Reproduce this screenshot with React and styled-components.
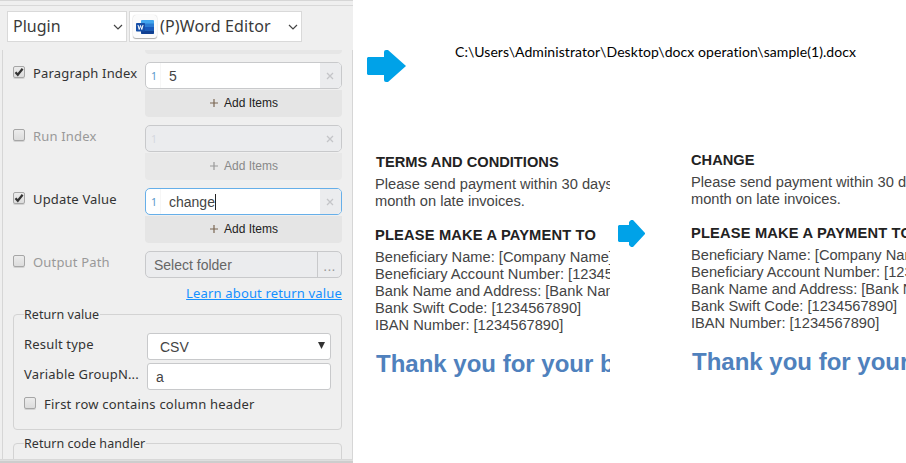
import React from "react";
import styled, { createGlobalStyle } from "styled-components";

const Global = createGlobalStyle`
  * { box-sizing: border-box; }
  body { margin: 0; background: #fff; overflow: hidden; }
`;

const Page = styled.div`
  display: flex;
  width: 906px;
  height: 463px;
  overflow: hidden;
  background: #fff;
`;

const Panel = styled.aside`
  display: flex;
  flex-direction: column;
  flex: none;
  width: 353px;
  height: 463px;
  background: #efefef;
  border-top: 1px solid #d6d6d6;
  font-family: "Noto Sans", sans-serif;
  color: #333;
`;

const Toolbar = styled.header`
  display: flex;
  gap: 2px;
  height: 45px;
  margin-top: 4px;
  padding: 5px 0 0 7px;
  border-top: 1px solid #d8d8d8;
`;

const Picker = styled.div`
  display: flex;
  align-items: center;
  width: ${(p) => p.$w}px;
  height: 31px;
  padding: 0 3px 0 ${(p) => p.$pad}px;
  background: #fff;
  border: 1px solid #d9d9d9;
  font-size: 16px;
  line-height: 29px;
  letter-spacing: ${(p) => p.$ls || 0}px;
  color: #3a3a3a;
  white-space: nowrap;
  svg.chevron { margin-left: auto; }
`;

const AppIcon = styled.span`
  display: flex;
  align-items: center;
  justify-content: center;
  width: 24px;
  height: 23px;
  margin-right: 3px;
  background: #fbfbfb;
  border-radius: 3px;
  box-shadow: 0 1px 1px #aaa, 0 0 1px #ccc;
`;

const Scroller = styled.main`
  display: flex;
  flex-direction: column;
  width: 351px;
  height: 409px;
  margin-left: 2px;
  padding: 0 10px 0 10px;
  overflow: hidden;
  border: solid #d6d6d6;
  border-width: 0 1px;
`;

const StatusStrip = styled.footer`
  height: 4px;
  background: #cdcdcd;
  border-top: 1px solid #d8d8d8;
  box-shadow: inset 0 1px 0 #dedede;
`;

const Remainder = styled.div`
  flex: none;
  width: 197px;
  height: 4px;
  margin-left: 132px;
  background: #e6e6e6;
  border-radius: 0 0 4px 4px;
`;

const Field = styled.section`
  display: flex;
  flex: none;
  height: ${(p) => p.$h || 63}px;
`;

const FieldLabel = styled.label`
  display: flex;
  width: 132px;
  gap: 8px;
  padding-top: 4px;
  font-size: 13px;
  line-height: 15px;
  letter-spacing: 0.17px;
  white-space: nowrap;
  color: ${(p) => (p.$off ? "#999" : "#333")};
`;

const Box = styled.span`
  display: flex;
  flex: none;
  width: 12px;
  height: 12px;
  border: 1px solid #a6a6a6;
  border-radius: 2px;
  background: linear-gradient(#ececec, #dcdcdc);
  box-shadow: 0 1px 0 #d2d2d2;
`;

const Controls = styled.div`
  display: flex;
  flex-direction: column;
  gap: 1px;
  width: 197px;
  font-family: "Liberation Sans", sans-serif;
`;

const Entry = styled.div`
  display: flex;
  height: 27px;
  overflow: hidden;
  border: 1px solid ${(p) => (p.$focus ? "#66afe9" : "#c8c9cb")};
  border-radius: 5px;
  background: ${(p) => (p.$off ? "#ebecee" : "#fff")};
  font-size: 14px;
  line-height: 26px;
  color: #444;
`;

const Ordinal = styled.span`
  width: 15px;
  padding-left: 5px;
  font: 10.5px/26px "Noto Sans", sans-serif;
  color: ${(p) => (p.$off ? "#d5d8de" : "#5798c9")};
  border-right: 1px solid #f2f2f2;
  border-right-color: ${(p) => (p.$off ? "transparent" : "#f6f6f6")};
`;

const Value = styled.span`
  display: flex;
  align-items: center;
  flex: 1;
  padding-left: 8px;
`;

const Caret = styled.i`
  width: 1px;
  height: 16px;
  background: #222;
`;

const Clear = styled.span`
  display: flex;
  align-items: center;
  justify-content: center;
  width: 21px;
  padding-right: 1px;
  background: #ebecee;
`;

const AddButton = styled.button`
  display: flex;
  align-items: center;
  justify-content: center;
  gap: 6px;
  height: 27px;
  padding: 0 0 0 1px;
  border: 0;
  border-radius: 0 0 4px 4px;
  background: ${(p) => (p.$off ? "#e8e8e8" : "#e5e5e5")};
  font: 12px/27px "Liberation Sans", sans-serif;
  color: ${(p) => (p.$off ? "#888" : "#222")};
  svg { margin-bottom: 2px; }
`;

const Folder = styled.div`
  display: flex;
  justify-content: space-between;
  height: 27px;
  padding-left: 8px;
  border: 1px solid #c8c9cb;
  border-radius: 5px;
  background: #ebecee;
  font-size: 14px;
  line-height: 26px;
  color: #666;
`;

const Browse = styled.span`
  width: 24px;
  border-left: 1px solid #c8c9cb;
  text-align: center;
  line-height: 28px;
  letter-spacing: 0.3px;
  color: #999;
`;

const HelpLink = styled.a`
  align-self: flex-end;
  flex: none;
  height: 16px;
  margin-top: 7px;
  font-size: 13px;
  line-height: 17px;
  letter-spacing: 0.16px;
  color: #1490ff;
  text-decoration: underline;
`;

const Group = styled.fieldset`
  flex: none;
  width: 329px;
  height: ${(p) => p.$h}px;
  margin: 0;
  margin-top: ${(p) => p.$top}px;
  padding: 0 10px;
  border: 1px solid #d3d3d3;
  border-radius: 4px;
  min-width: 0;
`;

const Legend = styled.legend`
  padding: 0 1px 0 0;
  height: 16px;
  font-size: 12.5px;
  line-height: 17px;
  letter-spacing: 0.05px;
`;

const GroupRow = styled.div`
  display: flex;
  height: 27px;
  margin-top: ${(p) => p.$top}px;
`;

const GroupLabel = styled.span`
  flex: none;
  width: 123px;
  font-size: 13px;
  line-height: 23px;
  letter-spacing: 0.18px;
  white-space: nowrap;
`;

const GroupInput = styled.div`
  display: flex;
  align-items: center;
  justify-content: space-between;
  width: 184px;
  padding: 1px 5px 0 ${(p) => p.$pad}px;
  border: 1px solid #c8c9cb;
  border-radius: 3px;
  background: #fff;
  font: 14px/25px "Liberation Sans", sans-serif;
  color: #444;
  svg { margin-bottom: 4px; }
`;

const CheckLine = styled.label`
  display: flex;
  gap: 8px;
  margin-top: 7px;
  font-size: 13px;
  line-height: 15px;
  letter-spacing: 0.22px;
  white-space: nowrap;
`;

const Results = styled.div`
  display: flex;
  flex-direction: column;
  flex: 1;
  min-width: 0;
`;

const PathRow = styled.div`
  display: flex;
  gap: 49px;
  height: 103px;
  padding: 50px 0 0 14px;
`;

const PathText = styled.span`
  margin-top: -8px;
  height: 20px;
  font: 14px/20px Lato, sans-serif;
  letter-spacing: 0.07px;
  color: #000;
  white-space: nowrap;
`;

const Compare = styled.div`
  display: flex;
  padding-left: 22px;
`;

const Doc = styled.article`
  flex: none;
  width: ${(p) => p.$w}px;
  margin-top: ${(p) => p.$top}px;
  overflow: hidden;
  white-space: nowrap;
  font: 14.67px/17px "Liberation Sans", sans-serif;
  color: #444;
`;

const DocHeading = styled.h3`
  height: 17px;
  margin: 0 0 5px ${(p) => p.$x || 0}px;
  font: bold 14.67px/17px "Liberation Sans", sans-serif;
  letter-spacing: ${(p) => p.$ls || 0}px;
  color: #222;
`;

const DocLines = styled.div`
  margin-bottom: ${(p) => p.$gap}px;
`;

const Thanks = styled.h2`
  margin: 0 0 0 1px;
  font: bold 24px/28px "Liberation Sans", sans-serif;
  color: #4f81bd;
`;

const ArrowCell = styled.div`
  width: 81px;
  padding: 117px 0 0 8px;
`;

const Chevron = () => (
  <svg className="chevron" width="10" height="8" viewBox="0 0 10 8">
    <path d="M1 2l4 4 4-4" fill="none" stroke="#444" strokeWidth="1.2" />
  </svg>
);

const WordLogo = () => (
  <svg width="18" height="14" viewBox="0 0 18 14">
    <rect x="5" y="0" width="13" height="14" rx="1" fill="#41a5ee" />
    <path d="M5 3.5h13v3.5H5z" fill="#2b7cd3" />
    <path d="M5 7h13v3.5H5z" fill="#185abd" />
    <path d="M5 10.500h13v2.500a1 1 0 0 1-1 1H6a1 1 0 0 1-1-1z" fill="#103f91" />
    <rect x="0" y="3" width="9" height="8.500" rx="0.800" fill="#1750a8" />
    <path d="M2 5l1.200 4.500L4.500 5.500 5.800 9.500 7 5" fill="none" stroke="#fff" strokeWidth="1" />
  </svg>
);

const Check = ({ on }) => (
  <Box>
    {on && (
      <svg width="10" height="10" viewBox="0 0 10 10">
        <path d="M1.500 5.200l2.300 2.600L8.600 1.800" fill="none" stroke="#333" strokeWidth="2.200" />
      </svg>
    )}
  </Box>
);

const Cross = () => (
  <svg width="8" height="8" viewBox="0 0 8 8">
    <path d="M1 1l6 6M7 1L1 7" stroke="#c4c5c8" strokeWidth="1.300" />
  </svg>
);

const Plus = ({ color }) => (
  <svg width="8" height="8" viewBox="0 0 8 8">
    <path d="M4 0v8M0 4h8" stroke={color} strokeWidth="1.200" />
  </svg>
);

const IndexField = ({ label, value, on, focus }) => (
  <Field>
    <FieldLabel $off={!on}>
      <Check on={on} />
      {label}
    </FieldLabel>
    <Controls>
      <Entry $off={!on} $focus={focus}>
        <Ordinal $off={!on}>1</Ordinal>
        <Value>
          {value}
          {focus && <Caret />}
        </Value>
        <Clear>
          <Cross />
        </Clear>
      </Entry>
      <AddButton $off={!on}>
        <Plus color={on ? "#7a6652" : "#999"} />
        Add Items
      </AddButton>
    </Controls>
  </Field>
);

const InvoiceText = ({ title, w, top, indent }) => (
  <Doc $w={w} $top={top}>
    <DocHeading $x={indent}>{title}</DocHeading>
    <DocLines $gap={17}>
      Please send payment within 30 days
      <br />
      month on late invoices.
    </DocLines>
    <DocHeading $ls={0.17}>PLEASE MAKE A PAYMENT TO</DocHeading>
    <DocLines $gap={16}>
      Beneficiary Name: [Company Name]
      <br />
      Beneficiary Account Number: [12345
      <br />
      Bank Name and Address: [Bank Nam
      <br />
      Bank Swift Code: [1234567890]
      <br />
      IBAN Number: [1234567890]
    </DocLines>
    <Thanks>Thank you for your b</Thanks>
  </Doc>
);

export default function App() {
  return (
    <Page>
      <Global />
      <Panel>
        <Toolbar>
          <Picker $w={120} $pad={5}>
            Plugin
            <Chevron />
          </Picker>
          <Picker $w={173} $pad={3} $ls={0.14}>
            <AppIcon>
              <WordLogo />
            </AppIcon>
            (P)Word Editor
            <Chevron />
          </Picker>
        </Toolbar>
        <Scroller>
          <Remainder />
          <Field $h={8} />
          <IndexField label="Paragraph Index" value="5" on />
          <IndexField label="Run Index" value="" />
          <IndexField label="Update Value" value="change" on focus />
          <Field $h={27}>
            <FieldLabel $off>
              <Check />
              Output Path
            </FieldLabel>
            <Controls>
              <Folder>
                Select folder
                <Browse>...</Browse>
              </Folder>
            </Controls>
          </Field>
          <HelpLink>Learn about return value</HelpLink>
          <Group $h={124} $top={5}>
            <Legend>Return value</Legend>
            <GroupRow $top={11}>
              <GroupLabel>Result type</GroupLabel>
              <GroupInput $pad={12}>
                CSV
                <svg width="7" height="7" viewBox="0 0 7 7">
                  <path d="M0 0h7L3.500 7z" fill="#333" />
                </svg>
              </GroupInput>
            </GroupRow>
            <GroupRow $top={3}>
              <GroupLabel>Variable GroupN...</GroupLabel>
              <GroupInput $pad={8}>a</GroupInput>
            </GroupRow>
            <CheckLine>
              <Check />
              First row contains column header
            </CheckLine>
          </Group>
          <Group $h={60} $top={5}>
            <Legend>Return code handler</Legend>
          </Group>
        </Scroller>
        <StatusStrip />
      </Panel>
      <Results>
        <PathRow>
          <svg width="39" height="32" viewBox="0 0 39 32">
            <path d="M1 7h16V2q0-2 2-2h2l18 16-18 16h-2q-2 0-2-2v-5H1l-1-1V8z" fill="#00a2e8" />
          </svg>
          <PathText>C:\Users\Administrator\Desktop\docx operation\sample(1).docx</PathText>
        </PathRow>
        <Compare>
          <InvoiceText title="TERMS AND CONDITIONS" w={235} top={51} indent={1} />
          <ArrowCell>
            <svg width="27" height="27" viewBox="0 0 27 27">
              <path d="M1 5h10V2l2-2h2l12 13v1L15 27h-2l-2-2v-3H1l-1-1V6z" fill="#00a2e8" />
            </svg>
          </ArrowCell>
          <InvoiceText title="CHANGE" w={215} top={49} indent={0} />
        </Compare>
      </Results>
    </Page>
  );
}
